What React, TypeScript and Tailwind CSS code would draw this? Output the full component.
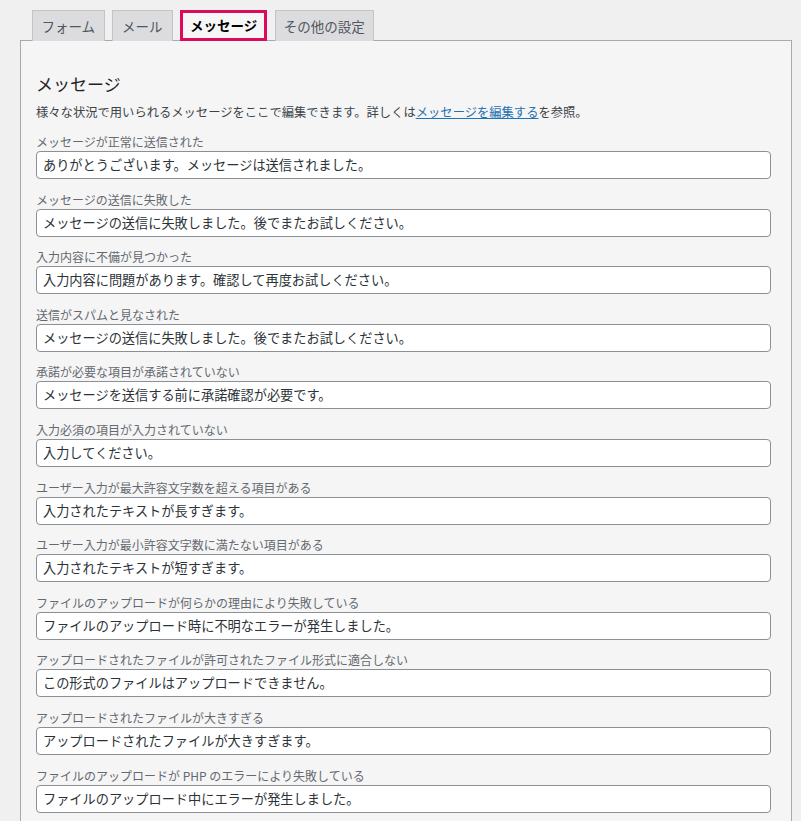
import React from "react";

const rows: [string, string][] = [
  ["メッセージが正常に送信された", "ありがとうございます。メッセージは送信されました。"],
  ["メッセージの送信に失敗した", "メッセージの送信に失敗しました。後でまたお試しください。"],
  ["入力内容に不備が見つかった", "入力内容に問題があります。確認して再度お試しください。"],
  ["送信がスパムと見なされた", "メッセージの送信に失敗しました。後でまたお試しください。"],
  ["承諾が必要な項目が承諾されていない", "メッセージを送信する前に承諾確認が必要です。"],
  ["入力必須の項目が入力されていない", "入力してください。"],
  ["ユーザー入力が最大許容文字数を超える項目がある", "入力されたテキストが長すぎます。"],
  ["ユーザー入力が最小許容文字数に満たない項目がある", "入力されたテキストが短すぎます。"],
  ["ファイルのアップロードが何らかの理由により失敗している", "ファイルのアップロード時に不明なエラーが発生しました。"],
  ["アップロードされたファイルが許可されたファイル形式に適合しない", "この形式のファイルはアップロードできません。"],
  ["アップロードされたファイルが大きすぎる", "アップロードされたファイルが大きすぎます。"],
  ["ファイルのアップロードが PHP のエラーにより失敗している", "ファイルのアップロード中にエラーが発生しました。"],
];

export default function App() {
  return (
    <div
      className="min-h-[821px] bg-[#f0f0f1] pt-[10px] pl-[20px] overflow-hidden"
      style={{ fontFamily: '"Noto Sans CJK JP", "Noto Sans", sans-serif' }}
    >
      <div className="flex gap-[7.5px] pl-[12px] relative z-10 -mb-px items-end">
        <div className="h-[31px] px-[8.5px] flex items-center border border-[#c3c4c7] border-b-0 bg-[#dcdcde] text-[13.5px] text-[#50575e]">
          フォーム
        </div>
        <div className="h-[31px] px-[9px] flex items-center border border-[#c3c4c7] border-b-0 bg-[#dcdcde] text-[13.5px] text-[#50575e]">
          メール
        </div>
        <div className="h-[31px] px-[7px] flex items-center border-[3px] border-[#dc0a5c] bg-[#f6f6f6] text-[13.5px] font-bold text-black">
          メッセージ
        </div>
        <div className="h-[31px] px-[8px] flex items-center border border-[#c3c4c7] border-b-0 bg-[#dcdcde] text-[13.5px] text-[#50575e]">
          その他の設定
        </div>
      </div>
      <div className="w-[772px] min-h-[800px] border border-[#a7aaad] bg-[#f5f5f5] pl-[15px] pt-[31px]">
        <h2 className="text-[17px] leading-[24px] text-[#1d2327]">メッセージ</h2>
        <p className="mt-[7px] text-[12.3px] leading-[18px] text-[#3c434a]">
          様々な状況で用いられるメッセージをここで編集できます。詳しくは
          <span className="text-[#2271b1] underline">メッセージを編集する</span>
          を参照。
        </p>
        <div className="mt-[12px] flex flex-col gap-[11.6px]">
          {rows.map(([label, value], i) => (
            <div key={i} className="flex flex-col">
              <div className="text-[12px] leading-[18px] text-[#646970]">{label}</div>
              <div className="w-[735px] h-[28px] rounded-[4px] border border-[#8c8f94] bg-white px-[6px] flex items-center text-[13.2px] text-[#2c3338]">
                {value}
              </div>
            </div>
          ))}
        </div>
      </div>
    </div>
  );
}
